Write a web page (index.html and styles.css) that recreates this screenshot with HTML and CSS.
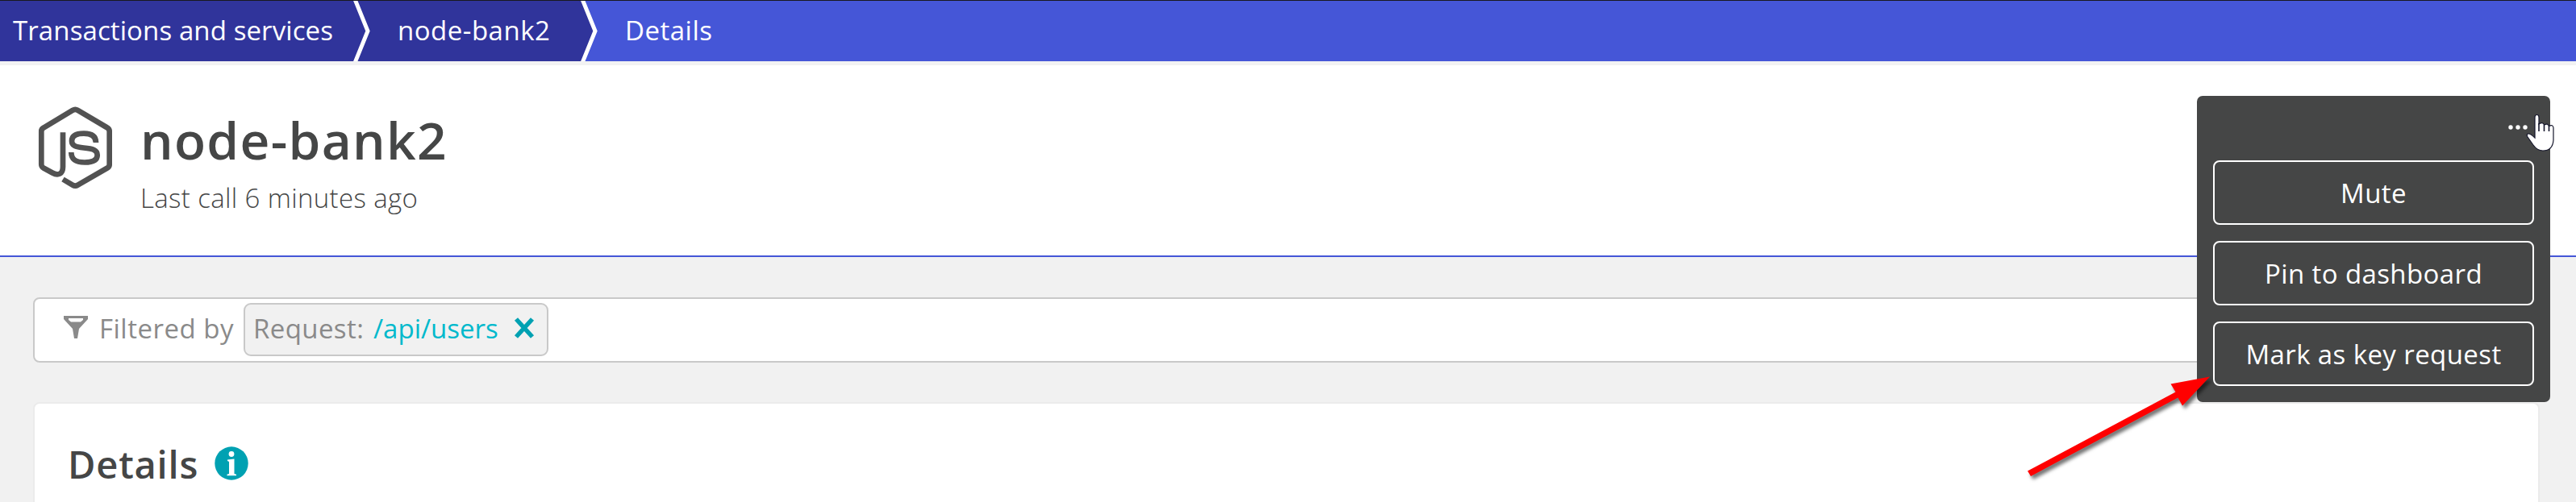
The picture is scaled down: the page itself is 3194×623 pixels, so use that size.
FILE: index.html
```html
<!DOCTYPE html>
<html lang="en">
<head>
<meta charset="utf-8">
<title>node-bank2</title>
<link rel="stylesheet" href="styles.css">
</head>
<body>
<nav class="crumbs">
  <a class="crumb crumb-root">Transactions and services</a>
  <svg class="chevron" viewBox="0 0 22 75"><path class="chevron-fill" d="M0 0h3l15.500 37.500L3 75H0z"/><path class="chevron-line" d="M2.400-1 18 37.500 2.400 76"/></svg>
  <a class="crumb crumb-service">node-bank2</a>
  <svg class="chevron" viewBox="0 0 22 75"><path class="chevron-fill" d="M0 0h3l15.500 37.500L3 75H0z"/><path class="chevron-line" d="M2.400-1 18 37.500 2.400 76"/></svg>
  <a class="crumb crumb-current">Details</a>
</nav>
<header class="hero">
  <svg class="node-logo" viewBox="0 0 92 104">
    <path d="M31 32.300V75C31 84 25 86.500 18 82.500L7 76.500Q4.300 75 4.300 72V31Q4.300 28 7 26.500L43 4.800Q46.300 2.800 49.500 4.800L86 26.500Q88.700 28 88.700 31V72Q88.700 75 86 76.500L49.500 97.700Q46.300 99.700 43 97.700L31 90.500"/>
    <path d="M72 45C72 36.500 66 33.700 57 33.700C47 33.700 42 37 42 43C42 48.500 46 50.500 57 51.500C68 52.500 73.700 54 73.700 60.500C73.700 67 68 69.500 58 69.500C47 69.500 41.500 66 41.300 57"/>
  </svg>
  <div class="hero-text">
    <h1 class="title">node-bank2</h1>
    <p class="subtitle">Last call 6 minutes ago</p>
  </div>
</header>
<main class="content">
  <section class="filter">
    <svg class="funnel" viewBox="0 0 30 28"><path fill-rule="evenodd" d="M0 0H30V4L19 16L17 28H13L11 16L0 4ZM6 3V5L9 7.500H21L24 5V3Z"/></svg>
    <span class="filter-label">Filtered by</span>
    <div class="chip">
      <span class="chip-key">Request:</span>
      <span class="chip-value">/api/users</span>
      <svg class="close" viewBox="0 0 26 26"><path d="M3 2 23 24M23 2 3 24"/></svg>
    </div>
  </section>
  <section class="card">
    <h2 class="card-title">Details</h2>
    <svg class="info" viewBox="0 0 42 42"><circle cx="21" cy="21" r="20.700"/><circle class="info-mark" cx="21" cy="9.500" r="3.400"/><path class="info-mark" d="M16 16.500 24.500 15.500V34L27 34.800V36.300H15.500V34.800L18 34V19L16 18Z"/></svg>
  </section>
</main>
<aside class="menu">
  <div class="menu-head"><svg class="dots" viewBox="0 0 24 6"><circle cx="3" cy="3" r="2.700"/><circle cx="12" cy="3" r="2.700"/><circle cx="21" cy="3" r="2.700"/></svg></div>
  <button class="action">Mute</button>
  <button class="action">Pin to dashboard</button>
  <button class="action">Mark as key request</button>
</aside>
<svg class="cursor" viewBox="0 0 36 48"><path d="M11 5Q11 1.500 13.500 1.500T16 5V13Q21 10 22.500 14Q27 11.500 28.500 15.500Q33.500 13 34 17.500V33Q33 46 21 46Q14 46 9 39L2 29Q0 25 3 25Q6 25 11 30Z"/><path class="cursor-lines" d="M16 12V22M22.500 14V22M28.500 15V22"/></svg>
<svg class="arrow" viewBox="0 0 240 140"><path d="M4 124.500 187.500 26.500 181.500 16.500 230 7.500 196 43.500 190.500 33.500 8 131Z"/></svg>
</body>
</html>
```
FILE: styles.css
```css
* { box-sizing: border-box; }
body { margin: 0; height: 623px; overflow: hidden; background: #f1f1f1; color: #454646; font-family: "Open Sans", sans-serif; position: relative; }

/* Breadcrumbs */
.crumbs { display: flex; height: 81px; border-top: 1px solid #19191f; border-bottom: 5px solid #f2f2f3; background: #4556d7; color: #fff; font-size: 33px; line-height: 73px; white-space: nowrap; letter-spacing: 0.5px; }
.crumb-root { width: 438px; padding-left: 16px; background: #30349b; letter-spacing: 0.1px; }
.crumb-service { width: 260px; padding-left: 33px; background: #30349b; }
.crumb-current { padding-left: 33px; }
.chevron { width: 22px; height: 75px; flex: none; background: #30349b; }
.crumb-service + .chevron { background: #4556d7; }
.chevron-fill { fill: #30349b; }
.chevron-line { fill: none; stroke: #fff; stroke-width: 5; }

/* Page header */
.hero { display: flex; height: 238px; background: #fff; border-bottom: 2px solid #4556d7; padding: 51px 0 0 47px; }
.node-logo { width: 92px; height: 104px; fill: none; stroke: #525252; stroke-width: 6.7; }
.hero-text { padding-left: 35px; white-space: nowrap; }
.title { margin: 0; font-size: 64px; line-height: 84px; font-weight: 600; letter-spacing: 1.3px; }
.subtitle { margin: 2px 0 0; font-size: 33px; line-height: 56px; font-weight: 300; letter-spacing: 0.35px; }

/* Filter bar */
.content { padding: 50px 45px 0 41px; }
.filter { display: flex; align-items: center; height: 81px; border: 2px solid #c9c9c9; border-radius: 8px; background: #fff; padding: 0 0 2px 36px; font-size: 33px; color: #8a8a8a; white-space: nowrap; }
.funnel { width: 30px; height: 28px; fill: #8a8a8a; margin-bottom: 5px; }
.filter-label { margin-left: 14px; width: 179px; letter-spacing: 0.5px; padding-bottom: 2px; }
.chip { display: flex; align-items: center; width: 378px; height: 66px; border: 2px solid #c9c9c9; border-radius: 9px; background: #f1f1f1; padding: 0 0 3px 10px; }
.chip-key { width: 149px; letter-spacing: 0.4px; }
.chip-value { width: 174px; color: #00b9cc; }
.close { width: 26px; height: 26px; stroke: #00a1b2; stroke-width: 5.5; }

/* Details card */
.card { display: flex; margin-top: 49px; height: 124px; border: 2px solid #ebebeb; border-bottom: 0; border-radius: 8px 8px 0 0; background: #fff; padding: 45px 0 0 41px; }
.card-title { margin: 0; font-size: 47px; line-height: 60px; width: 182px; white-space: nowrap; font-weight: 600; letter-spacing: 0.8px; }
.info { width: 42px; height: 42px; fill: #00a1b2; margin-top: 8px; }
.info-mark { fill: #fff; }

/* Action menu */
.menu { position: absolute; left: 2724px; top: 119px; width: 438px; height: 380px; padding: 0 20px; border-radius: 7px; background: #454646; display: flex; flex-direction: column; gap: 20px; }
.menu-head { height: 60px; display: flex; justify-content: flex-end; padding: 36px 8px 0 0; }
.dots { width: 24px; height: 6px; fill: #fff; }
.action { height: 80px; border: 2px solid #fff; border-radius: 8px; background: none; color: #fff; font: 33px/72px "Open Sans", sans-serif; letter-spacing: 0.4px; padding: 1px 0 0; white-space: nowrap; }

/* Pointer and callout */
.cursor { position: absolute; left: 3132px; top: 141px; width: 36px; height: 48px; fill: #fff; stroke: #15162b; stroke-width: 1.2; }
.cursor-lines { fill: none; stroke-width: 1.6; }
.arrow { position: absolute; left: 2510px; top: 460px; width: 240px; height: 140px; fill: #f00; filter: drop-shadow(3px 4px 2px rgba(0,0,0,.55)); }
```
